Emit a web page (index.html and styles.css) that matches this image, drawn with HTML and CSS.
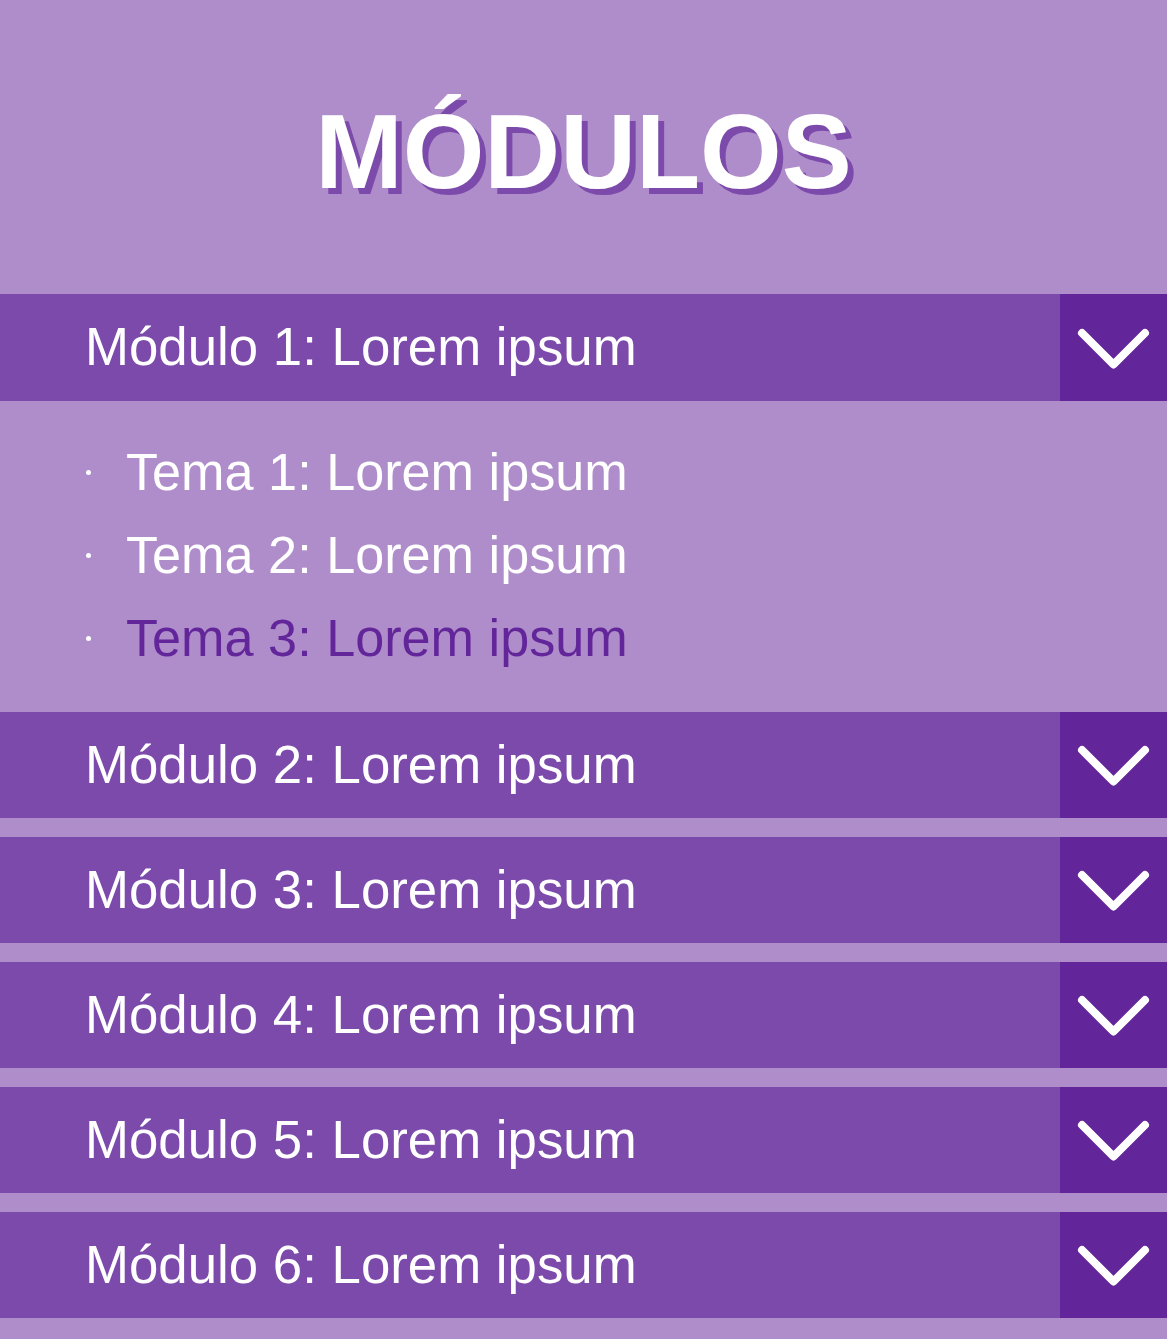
FILE: index.html
```html
<!DOCTYPE html>
<html lang="es">
<head>
<meta charset="utf-8">
<title>Módulos</title>
<link rel="stylesheet" href="styles.css">
</head>
<body>
<div class="page">
  <header class="header">
    <h1 class="title">MÓDULOS</h1>
  </header>
  <section class="module open">
    <div class="bar">
      <span class="bar-label">Módulo 1: Lorem ipsum</span>
      <span class="toggle"><svg viewBox="0 0 107 106" width="107" height="106"><path d="M22 38 L53.5 69.5 L85 38" /></svg></span>
    </div>
    <ul class="topics">
      <li>Tema 1: Lorem ipsum</li>
      <li>Tema 2: Lorem ipsum</li>
      <li class="active">Tema 3: Lorem ipsum</li>
    </ul>
  </section>
  <section class="module">
    <div class="bar">
      <span class="bar-label">Módulo 2: Lorem ipsum</span>
      <span class="toggle"><svg viewBox="0 0 107 106" width="107" height="106"><path d="M22 38 L53.5 69.5 L85 38" /></svg></span>
    </div>
  </section>
  <section class="module">
    <div class="bar">
      <span class="bar-label">Módulo 3: Lorem ipsum</span>
      <span class="toggle"><svg viewBox="0 0 107 106" width="107" height="106"><path d="M22 38 L53.5 69.5 L85 38" /></svg></span>
    </div>
  </section>
  <section class="module">
    <div class="bar">
      <span class="bar-label">Módulo 4: Lorem ipsum</span>
      <span class="toggle"><svg viewBox="0 0 107 106" width="107" height="106"><path d="M22 38 L53.5 69.5 L85 38" /></svg></span>
    </div>
  </section>
  <section class="module">
    <div class="bar">
      <span class="bar-label">Módulo 5: Lorem ipsum</span>
      <span class="toggle"><svg viewBox="0 0 107 106" width="107" height="106"><path d="M22 38 L53.5 69.5 L85 38" /></svg></span>
    </div>
  </section>
  <section class="module">
    <div class="bar">
      <span class="bar-label">Módulo 6: Lorem ipsum</span>
      <span class="toggle"><svg viewBox="0 0 107 106" width="107" height="106"><path d="M22 38 L53.5 69.5 L85 38" /></svg></span>
    </div>
  </section>
</div>
</body>
</html>
```

FILE: styles.css
```css
html, body {
  margin: 0;
  padding: 0;
  background: #af8dca;
}
body {
  font-family: "Liberation Sans", Arial, Helvetica, sans-serif;
  color: #ffffff;
}
.page {
  display: flex;
  flex-direction: column;
  min-height: 1339px;
  background: #af8dca;
}
.header {
  height: 294px;
  box-sizing: border-box;
  padding-top: 99px;
  text-align: center;
}
.title {
  margin: 0;
  font-size: 105px;
  line-height: 105px;
  font-weight: 700;
  color: #ffffff;
  letter-spacing: 0;
  text-shadow: 6px 6px 0 #7c4aab;
}
.module {
  margin-bottom: 19px;
}
.module.open {
  margin-bottom: 0;
}
.bar {
  display: flex;
  align-items: center;
  height: 106px;
  background: #7c4aab;
}
.module.open .bar {
  height: 107px;
}
.bar-label {
  flex: 1;
  padding-left: 85px;
  font-size: 52.8px;
  line-height: 1;
  color: #ffffff;
}
.toggle {
  display: flex;
  align-items: center;
  justify-content: center;
  width: 107px;
  height: 100%;
  background: #62259a;
}
.toggle svg {
  display: block;
}
.toggle path {
  fill: none;
  stroke: #ffffff;
  stroke-width: 8;
  stroke-linecap: round;
  stroke-linejoin: round;
}
.topics {
  list-style: none;
  margin: 0;
  padding: 30px 0 32px 126px;
}
.topics li {
  position: relative;
  font-size: 52.2px;
  line-height: 83px;
  color: #ffffff;
}
.topics li::before {
  content: "";
  position: absolute;
  left: -40px;
  top: 39px;
  width: 5px;
  height: 5px;
  border-radius: 50%;
  background: #ffffff;
}
.topics li.active {
  color: #62259a;
}
```
